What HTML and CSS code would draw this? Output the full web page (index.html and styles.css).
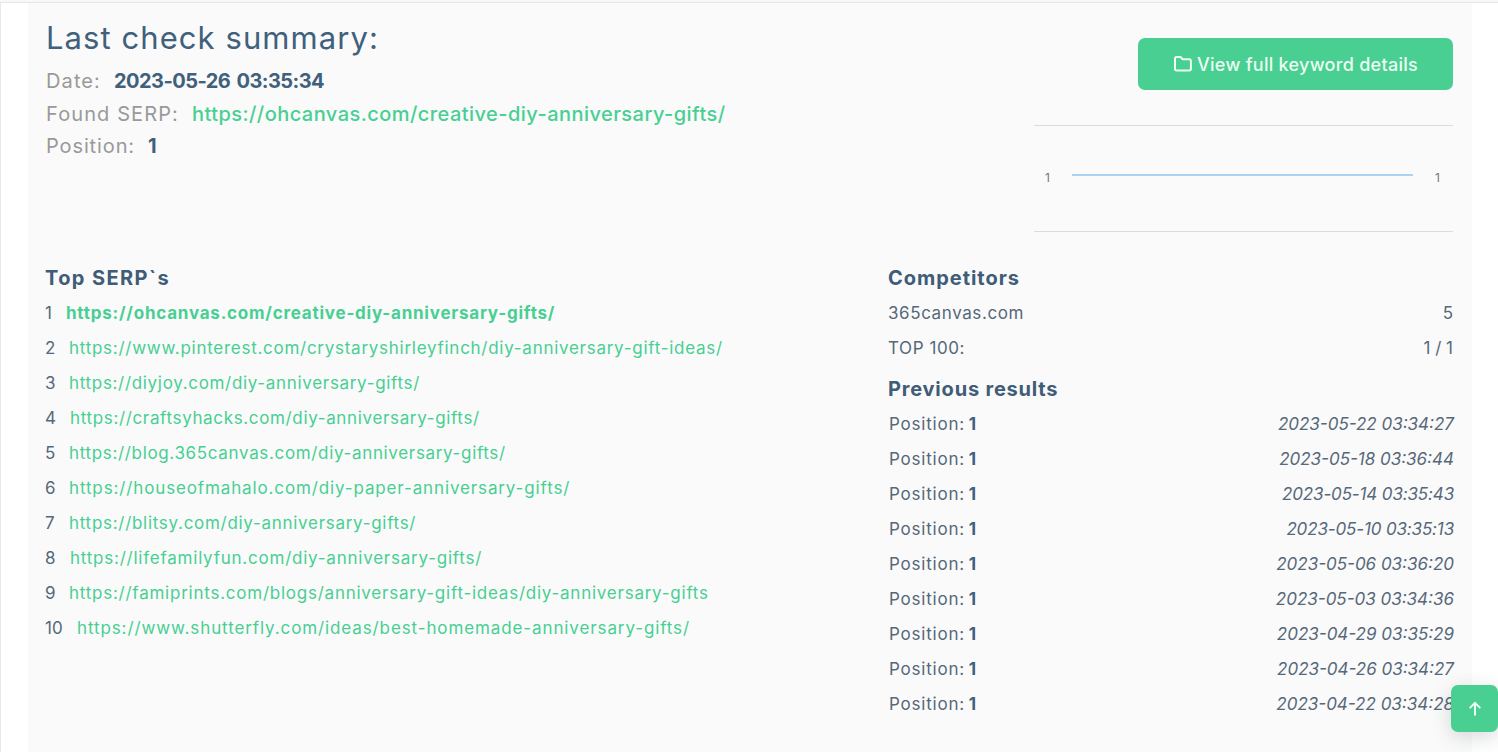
FILE: index.html
```html
<!DOCTYPE html>
<html lang="en">
<head>
<meta charset="utf-8">
<title>Keyword check summary</title>
<link rel="stylesheet" href="styles.css">
</head>
<body>
<div class="page">
<main class="panel">
  <section class="summary">
    <div class="facts">
      <h1 class="title">Last check summary:</h1>
      <p class="fact"><span class="label date-label">Date:</span><b class="date">2023-05-26 03:35:34</b></p>
      <p class="fact"><span class="label serp-label">Found SERP:</span><a class="found">https://ohcanvas.com/creative-diy-anniversary-gifts/</a></p>
      <p class="fact"><span class="label">Position:</span><b>1</b></p>
    </div>
    <div class="side">
      <a class="button">
        <svg class="folder" viewBox="0 0 18 16"><path d="M2.6 1H6.6L8.5 3.2H15.2Q16.9 3.2 16.9 4.9V12.7Q16.9 14.4 15.2 14.4H2.7Q1 14.4 1 12.7V2.7Q1 1 2.6 1Z" fill="none" stroke="currentColor" stroke-width="2" stroke-linejoin="round"/></svg>
        <span>View full keyword details</span>
      </a>
      <div class="chart"><span>1</span><i class="line"></i><span>1</span></div>
    </div>
  </section>
  <section class="results">
    <div class="serps">
      <h2 class="heading top-heading">Top SERP`s</h2>
      <ol class="list">
        <li><span class="num">1</span><a>https://ohcanvas.com/creative-diy-anniversary-gifts/</a></li>
        <li><span class="num">2</span><a>https://www.pinterest.com/crystaryshirleyfinch/diy-anniversary-gift-ideas/</a></li>
        <li><span class="num">3</span><a>https://diyjoy.com/diy-anniversary-gifts/</a></li>
        <li><span class="num">4</span><a>https://craftsyhacks.com/diy-anniversary-gifts/</a></li>
        <li><span class="num">5</span><a>https://blog.365canvas.com/diy-anniversary-gifts/</a></li>
        <li><span class="num">6</span><a>https://houseofmahalo.com/diy-paper-anniversary-gifts/</a></li>
        <li><span class="num">7</span><a>https://blitsy.com/diy-anniversary-gifts/</a></li>
        <li><span class="num">8</span><a>https://lifefamilyfun.com/diy-anniversary-gifts/</a></li>
        <li><span class="num">9</span><a>https://famiprints.com/blogs/anniversary-gift-ideas/diy-anniversary-gifts</a></li>
        <li><span class="num">10</span><a>https://www.shutterfly.com/ideas/best-homemade-anniversary-gifts/</a></li>
      </ol>
    </div>
    <div class="stats">
      <h2 class="heading">Competitors</h2>
      <div class="row"><span class="name">365canvas.com</span><span>5</span></div>
      <div class="row"><span class="name">TOP 100:</span><span>1 / 1</span></div>
      <h2 class="heading previous">Previous results</h2>
      <div class="row"><span class="pos">Position: <b>1</b></span><em>2023-05-22 03:34:27</em></div>
      <div class="row"><span class="pos">Position: <b>1</b></span><em>2023-05-18 03:36:44</em></div>
      <div class="row"><span class="pos">Position: <b>1</b></span><em class="snug">2023-05-14 03:35:43</em></div>
      <div class="row"><span class="pos">Position: <b>1</b></span><em class="tight">2023-05-10 03:35:13</em></div>
      <div class="row"><span class="pos">Position: <b>1</b></span><em>2023-05-06 03:36:20</em></div>
      <div class="row"><span class="pos">Position: <b>1</b></span><em>2023-05-03 03:34:36</em></div>
      <div class="row"><span class="pos">Position: <b>1</b></span><em>2023-04-29 03:35:29</em></div>
      <div class="row"><span class="pos">Position: <b>1</b></span><em>2023-04-26 03:34:27</em></div>
      <div class="row"><span class="pos">Position: <b>1</b></span><em>2023-04-22 03:34:28</em></div>
    </div>
  </section>
</main>
</div>
<a class="to-top"><svg viewBox="0 0 14 16"><path d="M7 14.5V2M1.7 7.2L7 1.9L12.3 7.2" fill="none" stroke="currentColor" stroke-width="1.9"/></svg></a>
</body>
</html>
```

FILE: styles.css
```css
* { box-sizing: border-box; margin: 0; padding: 0; }
html { overflow: hidden; }
body {
  height: 752px;
  overflow: hidden;
  padding-top: 2px;
  background: #f8f8f8;
  color: #566879;
  font: 400 17px/35px Inter, "Open Sans", sans-serif;
}
.page {
  height: 750px;
  padding: 0 26px 0 27px;
  background: #fff;
  border-top: 1px solid #e6e6e6;
  border-left: 1px solid #e8e8e8;
}
.panel { height: 100%; padding: 0 19px 0 17px; background: #fafafa; }
.summary { display: flex; justify-content: space-between; height: 258px; }
.facts { padding: 13px 0 0 1px; }
.title {
  height: 49px;
  color: #40607c;
  font-size: 31px;
  font-weight: 400;
  line-height: 44px;
  letter-spacing: 1.07px;
}
.fact { display: flex; gap: 13px; font-size: 20px; line-height: 32.5px; }
.fact b { color: #40607c; }
.label { color: #999; letter-spacing: .89px; }
.date-label, .serp-label { letter-spacing: 1.11px; }
.date { letter-spacing: -.54px; word-spacing: 2px; margin-right: -2px; }
.found { color: #48cf93; font-weight: 500; letter-spacing: .45px; }
.side { display: flex; flex-direction: column; width: 419px; padding-top: 35px; }
.button {
  display: flex;
  align-self: flex-end;
  align-items: center;
  justify-content: center;
  gap: 5px;
  width: 315px;
  height: 52px;
  padding-left: 1px;
  border-radius: 7px;
  background: #48cf91;
  color: #ecfdf4;
  font-size: 18px;
  font-weight: 500;
  letter-spacing: .28px;
}
.folder { width: 18px; height: 16px; }
.chart {
  display: flex;
  align-items: center;
  justify-content: space-between;
  height: 107px;
  margin-top: 35px;
  padding: 0 13px 3px 11px;
  border-top: 1px solid #dcdcdc;
  border-bottom: 1px solid #dcdcdc;
  color: #777;
  font-size: 12px;
}
.chart .line { width: 341px; height: 2px; margin-bottom: 5px; background: #a9d2f3; }
.results { display: flex; }
.serps { width: 843px; }
.stats { flex: 1; }
.heading { height: 35px; color: #3f5c78; font-size: 20px; font-weight: 700; line-height: 34px; letter-spacing: .97px; }
.top-heading { letter-spacing: 1.38px; }
.previous { height: 41px; padding-top: 6px; letter-spacing: .8px; }
.list { list-style: none; }
.list li { display: flex; height: 35px; white-space: nowrap; }
.num { width: 24px; }
.list a { color: #48cf93; letter-spacing: .73px; }
.list li:nth-child(1) .num { width: 21px; }
.list li:nth-child(1) a { font-weight: 700; letter-spacing: .77px; }
.list li:nth-child(3) a { letter-spacing: .68px; }
.list li:nth-child(4) .num { width: 25px; }
.list li:nth-child(4) a { letter-spacing: .65px; }
.list li:nth-child(5) a { letter-spacing: .66px; }
.list li:nth-child(6) a { letter-spacing: .87px; }
.list li:nth-child(7) a { letter-spacing: .71px; }
.list li:nth-child(8) .num { width: 25px; }
.list li:nth-child(8) a { letter-spacing: .77px; }
.list li:nth-child(9) a { letter-spacing: .76px; }
.list li:nth-child(10) .num { width: 32px; }
.list li:nth-child(10) a { letter-spacing: .89px; }
.row { display: flex; justify-content: space-between; height: 35px; }
.row b { color: #40607c; letter-spacing: 0; }
.row em { margin-right: -1px; }
.name { letter-spacing: .59px; }
.pos { padding-left: 1px; letter-spacing: .8px; word-spacing: -2px; }
.snug { letter-spacing: -.14px; }
.tight { letter-spacing: -.14px; }
.to-top {
  position: fixed;
  right: 0;
  bottom: 20px;
  display: flex;
  align-items: center;
  justify-content: center;
  width: 47px;
  height: 47px;
  border-radius: 7px;
  background: #48cf91;
  color: #f4fff9;
  box-shadow: 0 5px 20px rgba(60, 70, 80, .2);
}
.to-top svg { width: 14px; height: 16px; }
```
